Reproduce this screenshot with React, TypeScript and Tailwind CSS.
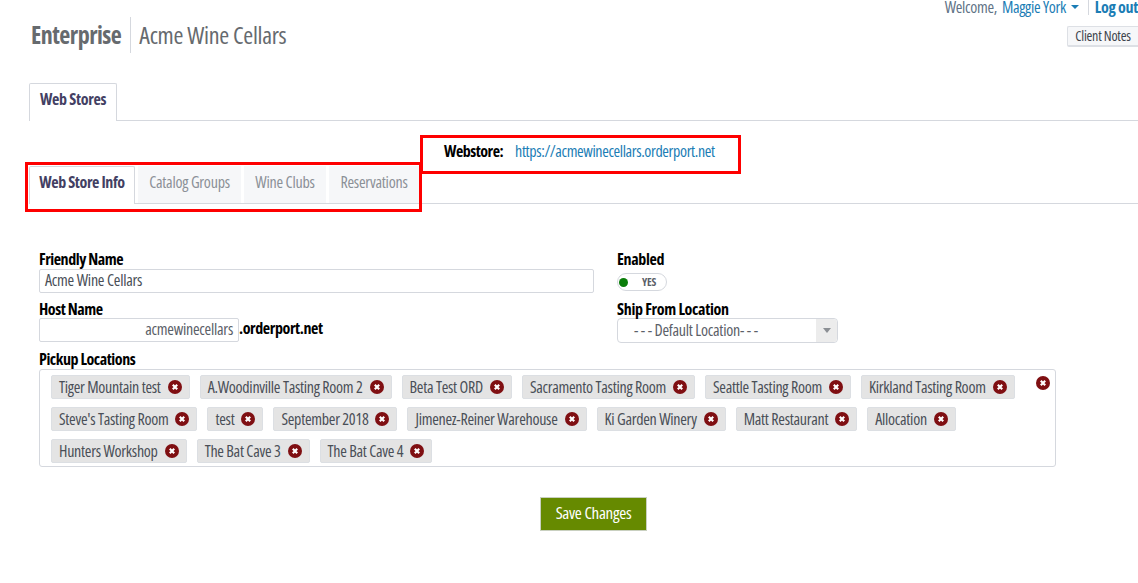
import React from 'react';

const rows = [
  ['Tiger Mountain test', 'A.Woodinville Tasting Room 2', 'Beta Test ORD', 'Sacramento Tasting Room', 'Seattle Tasting Room', 'Kirkland Tasting Room'],
  ["Steve's Tasting Room", 'test', 'September 2018', 'Jimenez-Reiner Warehouse', 'Ki Garden Winery', 'Matt Restaurant', 'Allocation'],
  ['Hunters Workshop', 'The Bat Cave 3', 'The Bat Cave 4'],
];

const RemoveIcon: React.FC = () => (
  <svg width="14" height="14" viewBox="0 0 14 14" className="shrink-0">
    <circle cx="7" cy="7" r="7" fill="#7f0f12" />
    <path d="M4.8 4.8l4.4 4.4M9.2 4.8l-4.4 4.4" stroke="#fff" strokeWidth="2.2" />
  </svg>
);

const Tag: React.FC<{ label: string }> = ({ label }) => (
  <div className="flex h-6 items-center gap-[7px] rounded-[2px] border border-[#dcdfe3] bg-[#e4e4e4] pl-[7px] pr-[7px] text-[16px] tracking-[-0.28px] text-[#4a4f57]">
    <span className="whitespace-nowrap">{label}</span>
    <RemoveIcon />
  </div>
);

const App: React.FC = () => {
  return (
    <div className="relative h-[583px] w-[1138px] overflow-hidden bg-white font-['Open_Sans'] tracking-[-0.25px] [font-stretch:75%]">
      <div className="flex h-[83px] justify-between pl-[31px]">
        <div className="mt-[22px] flex h-[26px] items-center self-start">
          <span className="pr-[9px] text-[24px] font-bold tracking-[-0.5px] text-[#666a6e]">Enterprise</span>
          <span className="border-l border-[#d5d8de] pl-2 text-[24px] tracking-[-0.3px] text-[#666a6e]">Acme Wine Cellars</span>
        </div>
        <div className="flex flex-col items-end">
          <div className="flex h-[14px] items-center text-[16px] tracking-[-0.32px] text-[#5f7386]">
            <span>Welcome,</span>
            <span className="ml-[5px] text-[#1b7db5]">Maggie York</span>
            <span className="ml-[5px] h-0 w-0 border-x-[4px] border-t-[4px] border-x-transparent border-t-[#1b7db5]"></span>
            <span className="ml-[9px] h-4 border-l border-[#d5d8de]"></span>
            <span className="ml-[6px] font-bold text-[#1b7db5]">Log out</span>
          </div>
          <div className="mt-[12px] flex h-[21px] w-[71px] items-center justify-center rounded-l-[2px] border border-b-2 border-r-0 border-[#dde0e5] bg-[#f6f7f9] pb-px text-[14px] text-[#3f444c]">
            Client Notes
          </div>
        </div>
      </div>

      <div className="ml-[29px] flex h-[38px] border-b border-[#d5d8de]">
        <div className="-mb-px flex w-[88px] items-center justify-center rounded-t-[2px] border border-b-0 border-[#d5d8de] bg-white pb-2 text-[16px] font-bold tracking-[-0.32px] text-[#433f63]">
          Web Stores
        </div>
      </div>

      <div className="mt-[20px] flex h-[20px] items-center pl-[444px] text-[16px]">
        <span className="font-bold tracking-[-0.5px] text-black">Webstore:</span>
        <span className="ml-[12px] tracking-[-0.38px] text-[#1b7db5]">https://acmewinecellars.orderport.net</span>
      </div>

      <div className="ml-[29px] mt-[5px] flex h-[38px] gap-[3px] border-b border-[#d5d8de]">
        <div className="-mb-px flex w-[106px] items-center justify-center rounded-t-[2px] border border-b-0 border-[#d5d8de] bg-white pb-[7px] text-[16px] font-bold tracking-[-0.4px] text-[#433f63]">
          Web Store Info
        </div>
        {[['Catalog Groups', 'w-[103px]'], ['Wine Clubs', 'w-[82px]'], ['Reservations', 'w-[90px]']].map(([label, w]) => (
          <div key={label} className={`flex ${w} items-center justify-center bg-[#f6f7f9] pb-[6px] text-[16px] text-[#8b9097]`}>
            {label}
          </div>
        ))}
      </div>

      <div className="pb-[31px] pl-[39px] pt-[47px]">
        <div className="flex">
          <div className="w-[578px]">
            <div className="h-[17px] text-[16px] font-bold leading-[17px] tracking-[-0.45px] text-black">Friendly Name</div>
            <div className="mt-px flex h-6 w-[555px] items-center rounded-[2px] border border-[#d5d8de] pb-[2px] pl-[5px] text-[16px] text-[#4a4f57]">
              Acme Wine Cellars
            </div>
            <div className="mt-[8px] h-[17px] text-[16px] font-bold leading-[17px] tracking-[-0.45px] text-black">Host Name</div>
            <div className="flex h-6 items-start">
              <div className="flex h-6 w-[200px] items-center justify-end rounded-[2px] border border-[#d5d8de] pb-[2px] pr-[5px] text-[16px] leading-[20px] text-[#5b6068]">
                acmewinecellars
              </div>
              <span className="h-6 text-[16px] font-bold leading-[21px] tracking-[-0.4px] text-black">.orderport.net</span>
            </div>
          </div>
          <div>
            <div className="h-[17px] text-[16px] font-bold leading-[17px] tracking-[-0.32px] text-black">Enabled</div>
            <div className="mt-[5px] flex h-[18px] w-[50px] items-center rounded-full border border-[#d5d8de] pl-[1px]">
              <span className="h-[9px] w-[9px] rounded-full bg-[#0a7d0a]"></span>
              <span className="ml-[14px] text-[11px] font-bold text-[#5b6068]">YES</span>
            </div>
            <div className="mt-[10px] h-[17px] text-[16px] font-bold leading-[17px] tracking-[-0.32px] text-black">Ship From Location</div>
            <div className="flex h-[25px] w-[221px] items-center rounded-[4px] border border-[#d5d8de] text-[16px] text-[#5b6068]">
              <span className="flex-1 pb-px pl-[16px]">- - - Default Location- - -</span>
              <span className="flex h-full w-[21px] items-center justify-center rounded-r-[4px] bg-[#ececec]">
                <span className="h-0 w-0 border-x-[4px] border-t-[5px] border-x-transparent border-t-[#8b8f94]"></span>
              </span>
            </div>
          </div>
        </div>

        <div className="mt-[8px] h-[17px] text-[16px] font-bold leading-[17px] tracking-[-0.45px] text-black">Pickup Locations</div>
        <div className="relative mt-px flex h-[98px] w-[1017px] flex-col gap-2 rounded-[3px] border border-[#d5d8de] pl-[11px] pt-[5px]">
          {rows.map((row, i) => (
            <div key={i} className="flex gap-[10px]">
              {row.map((label) => (
                <Tag key={label} label={label} />
              ))}
            </div>
          ))}
          <span className="absolute right-[5px] top-[6px]">
            <RemoveIcon />
          </span>
        </div>

        <div className="ml-[501px] mt-[30px] flex h-[34px] w-[107px] items-center justify-center border border-[#c9d0c0] bg-[#668a00] pb-[2px] text-[17px] tracking-[-0.32px] text-white">
          Save Changes
        </div>
      </div>

      {/* red annotation boxes */}
      <div className="absolute left-[420px] top-[135px] h-[39px] w-[321px] border-[3px] border-[#fe0000]"></div>
      <div className="absolute left-[25px] top-[162px] h-[50px] w-[397px] border-[3px] border-[#fe0000]"></div>
    </div>
  );
};

export default App;
